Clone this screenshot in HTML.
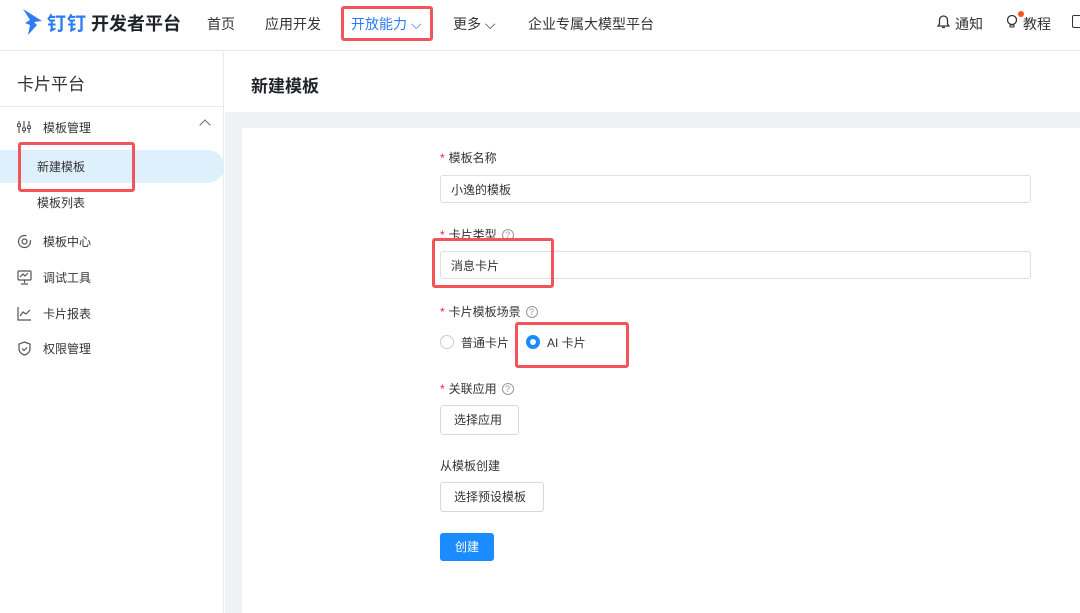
<!DOCTYPE html>
<html><head><meta charset="utf-8"><style>
*{margin:0;padding:0;box-sizing:border-box}
body{width:1080px;height:613px;overflow:hidden;background:#fff;font-family:"Liberation Sans","Noto Sans CJK SC",sans-serif;color:#1f2329;position:relative}
.a{position:absolute}
.hdr{left:0;top:0;width:1080px;height:51px;border-bottom:1px solid #e8e8e8;background:#fff}
.nav{top:14px;font-size:14px;color:#333}
.side{left:0;top:52px;width:224px;height:561px;border-right:1px solid #e8e8e8;background:#fff}
.main{left:225px;top:52px;width:855px;height:561px;background:#f0f1f4}
.si{font-size:12px;color:#333}
.lbl{font-size:12px;color:#333}
.lbl b{color:#f5222d;font-weight:normal;margin-right:4px}
.inp{left:440px;width:591px;height:28px;border:1px solid #dcdfe6;border-radius:3px;font-size:12px;padding:5px 10px;color:#333}
.btn{border:1px solid #d9d9d9;border-radius:3px;font-size:12px;color:#333;height:30px;line-height:28px;padding:0 13px;background:#fff}
.red{border:3px solid #f2545b;border-radius:3px}
.q{display:inline-block;width:12px;height:12px;border:1px solid #999;border-radius:50%;font-size:9px;line-height:10px;text-align:center;color:#999;margin-left:5px;vertical-align:1px}
</style></head><body>
<div class="a hdr"></div>
<svg class="a" style="left:22px;top:8px" width="22" height="28" viewBox="0 0 22 28"><path d="M1 1 L20 13 L12 14 L15 17 L6 27 L8 17 L3 15 L8 12 Z" fill="#2b7cf6"/></svg>
<div class="a" style="left:47px;top:9px;font-size:19px;font-weight:bold;color:#2b7cf6;letter-spacing:1px">钉钉</div>
<div class="a" style="left:91px;top:10px;font-size:18px;font-weight:bold;color:#1f2329">开发者平台</div>
<div class="a nav" style="left:207px">首页</div>
<div class="a nav" style="left:265px">应用开发</div>
<div class="a nav" style="left:351px;color:#2b7cf6">开放能力 ⌵</div>
<div class="a red" style="left:341px;top:6px;width:92px;height:35px"></div>
<div class="a nav" style="left:453px">更多 ⌵</div>
<div class="a nav" style="left:528px">企业专属大模型平台</div>
<div class="a nav" style="left:955px">通知</div>
<svg class="a" style="left:937px;top:15px" width="13" height="14"><path d="M6.5 1a4 4 0 0 0-4 4v4l-1.5 2h11l-1.5-2V5a4 4 0 0 0-4-4zM5 12.5h3" stroke="#333" fill="#fff" stroke-width="1.3"/></svg>
<div class="a nav" style="left:1023px">教程</div>
<svg class="a" style="left:1005px;top:14px" width="14" height="16"><circle cx="7" cy="6" r="4.5" stroke="#333" fill="none" stroke-width="1.3"/><path d="M5 11h4v2H5z" stroke="#333" fill="none"/></svg>
<div class="a" style="left:1018px;top:11px;width:6px;height:6px;border-radius:50%;background:#f5541f"></div>
<div class="a" style="left:1072px;top:15px;width:10px;height:13px;border:1.5px solid #333;border-radius:2px"></div>

<div class="a side"></div>
<div class="a" style="left:17px;top:70px;font-size:17px;color:#333">卡片平台</div>
<div class="a" style="left:0;top:106px;width:224px;height:1px;background:#e8e8e8"></div>
<svg class="a" style="left:17px;top:120px" width="14" height="14"><path d="M2 1v12M7 1v12M12 1v12" stroke="#555" stroke-width="1.2"/><rect x="0.5" y="4" width="3" height="2.5" fill="#fff" stroke="#555"/><rect x="5.5" y="8" width="3" height="2.5" fill="#fff" stroke="#555"/><rect x="10.5" y="6" width="3" height="2.5" fill="#fff" stroke="#555"/></svg>
<div class="a si" style="left:43px;top:119px">模板管理</div>
<div class="a" style="left:201px;top:121px;width:8px;height:8px;border-left:1.3px solid #666;border-top:1.3px solid #666;transform:rotate(45deg)"></div>
<div class="a" style="left:0;top:150px;width:224px;height:33px;background:#dff0fd;border-radius:0 16px 16px 0"></div>
<div class="a si" style="left:37px;top:158px">新建模板</div>
<div class="a red" style="left:18px;top:142px;width:117px;height:50px"></div>
<div class="a si" style="left:37px;top:194px">模板列表</div>
<svg class="a" style="left:17px;top:234px" width="15" height="15"><circle cx="7.5" cy="7.5" r="6" stroke="#555" fill="none" stroke-width="1.2" stroke-dasharray="30 6"/><circle cx="7.5" cy="7.5" r="2.5" stroke="#555" fill="none" stroke-width="1.2"/></svg>
<div class="a si" style="left:43px;top:233px">模板中心</div>
<svg class="a" style="left:17px;top:270px" width="15" height="15"><rect x="1" y="1" width="13" height="9" rx="1" stroke="#555" fill="none" stroke-width="1.2"/><path d="M3 7l3-3 2 2 3-3M7.5 10v3M4 14h7" stroke="#555" fill="none" stroke-width="1.2"/></svg>
<div class="a si" style="left:43px;top:269px">调试工具</div>
<svg class="a" style="left:17px;top:306px" width="15" height="15"><path d="M1 1v13h13M3 10l3-4 3 2 4-4" stroke="#555" fill="none" stroke-width="1.2"/></svg>
<div class="a si" style="left:43px;top:305px">卡片报表</div>
<svg class="a" style="left:17px;top:341px" width="15" height="15"><path d="M7.5 1L13 3v5c0 3-3 5.5-5.5 6C5 13.5 2 11 2 8V3z" stroke="#555" fill="none" stroke-width="1.2"/><path d="M5 7.5l2 2 3-3" stroke="#555" fill="none" stroke-width="1.2"/></svg>
<div class="a si" style="left:43px;top:340px">权限管理</div>

<div class="a main"></div>
<div class="a" style="left:225px;top:52px;width:855px;height:60px;background:#fff"></div>
<div class="a" style="left:251px;top:72px;font-size:17px;font-weight:bold;color:#1f2329">新建模板</div>
<div class="a" style="left:242px;top:128px;width:838px;height:485px;background:#fff"></div>

<div class="a lbl" style="left:440px;top:149px"><b>*</b>模板名称</div>
<div class="a inp" style="top:175px">小逸的模板</div>
<div class="a lbl" style="left:440px;top:226px"><b>*</b>卡片类型<span class="q">?</span></div>
<div class="a inp" style="top:251px">消息卡片</div>
<div class="a red" style="left:432px;top:238px;width:122px;height:50px"></div>
<div class="a lbl" style="left:440px;top:303px"><b>*</b>卡片模板场景<span class="q">?</span></div>
<div class="a" style="left:440px;top:335px;width:14px;height:14px;border:1px solid #ccc;border-radius:50%"></div>
<div class="a lbl" style="left:461px;top:334px">普通卡片</div>
<div class="a" style="left:526px;top:335px;width:14px;height:14px;border:4px solid #1a8cff;border-radius:50%"></div>
<div class="a lbl" style="left:547px;top:334px">AI 卡片</div>
<div class="a red" style="left:515px;top:322px;width:114px;height:46px"></div>
<div class="a lbl" style="left:440px;top:380px"><b>*</b>关联应用<span class="q">?</span></div>
<div class="a btn" style="left:440px;top:405px;width:79px">选择应用</div>
<div class="a lbl" style="left:440px;top:457px">从模板创建</div>
<div class="a btn" style="left:440px;top:482px;width:104px">选择预设模板</div>
<div class="a" style="left:440px;top:533px;width:54px;height:28px;background:#1a8cff;border-radius:3px;color:#fff;font-size:12px;text-align:center;line-height:28px">创建</div>
</body></html>
